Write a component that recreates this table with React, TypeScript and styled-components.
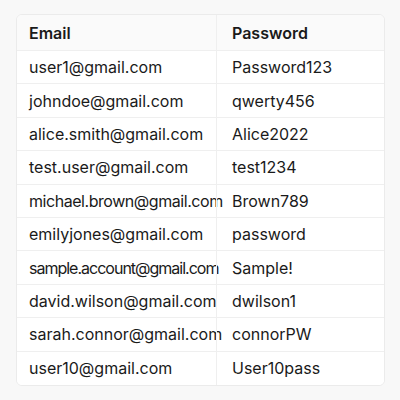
import React from "react";
import styled, { createGlobalStyle } from "styled-components";

const Global = createGlobalStyle`
  html, body { margin: 0; padding: 0; background: #f8f8f8; }
  body { font-family: Inter, "Noto Sans", sans-serif; color: #1a1a1a; }
`;

const Page = styled.div`
  width: 400px;
  height: 400px;
  box-sizing: border-box;
  padding: 14px 15px 14px 16px;
`;

const Card = styled.div`
  background: #ffffff;
  border: 1px solid #ebebeb;
  border-radius: 6px;
  overflow: hidden;
`;

const Row = styled.div<{ $head?: boolean }>`
  display: grid;
  grid-template-columns: 199px 1fr;
  box-sizing: border-box;
  height: ${(p) => (p.$head ? "36px" : "33.4px")};
  background: ${(p) => (p.$head ? "#fafafa" : "#ffffff")};
  border-bottom: 1px solid #efefef;
  &:last-child { border-bottom: none; }
`;

const Cell = styled.div<{ $head?: boolean; $squeeze?: number }>`
  display: flex;
  align-items: center;
  padding: 0 12px;
  font-size: 16px;
  font-weight: ${(p) => (p.$head ? 600 : 400)};
  letter-spacing: ${(p) => (p.$squeeze !== undefined ? `${p.$squeeze}px` : "0")};
  white-space: nowrap;
  overflow: visible;
  & + & {
    border-left: 1px solid #efefef;
    padding-left: 15px;
  }
`;

const data: [string, string, number?][] = [
  ["user1@gmail.com", "Password123"],
  ["johndoe@gmail.com", "qwerty456"],
  ["alice.smith@gmail.com", "Alice2022"],
  ["test.user@gmail.com", "test1234"],
  ["michael.brown@gmail.com", "Brown789", -0.45],
  ["emilyjones@gmail.com", "password"],
  ["sample.account@gmail.com", "Sample!", -1.0],
  ["david.wilson@gmail.com", "dwilson1"],
  ["sarah.connor@gmail.com", "connorPW"],
  ["user10@gmail.com", "User10pass"],
];

export default function App() {
  return (
    <>
      <Global />
      <Page>
        <Card>
          <Row $head>
            <Cell $head>Email</Cell>
            <Cell $head>Password</Cell>
          </Row>
          {data.map(([e, p, s]) => (
            <Row key={e}>
              <Cell $squeeze={s}>{e}</Cell>
              <Cell>{p}</Cell>
            </Row>
          ))}
        </Card>
      </Page>
    </>
  );
}
